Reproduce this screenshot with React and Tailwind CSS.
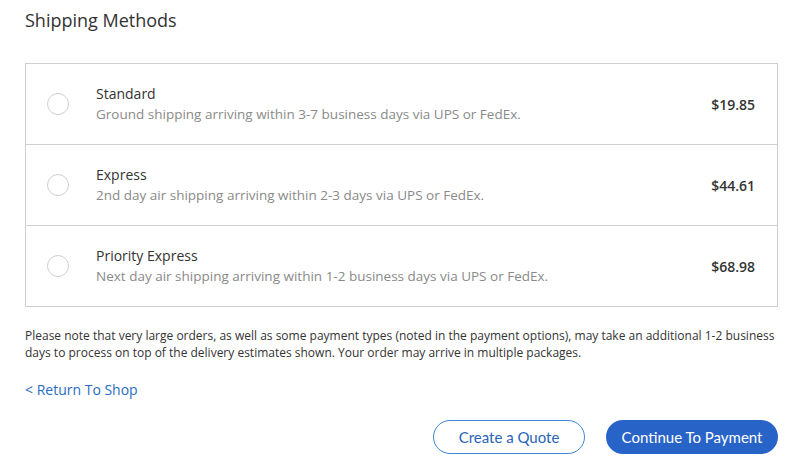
import React, { useState } from 'react';

const methods = [
  { id: 'standard', name: 'Standard', desc: 'Ground shipping arriving within 3-7 business days via UPS or FedEx.', price: '$19.85' },
  { id: 'express', name: 'Express', desc: '2nd day air shipping arriving within 2-3 days via UPS or FedEx.', price: '$44.61' },
  { id: 'priority', name: 'Priority Express', desc: 'Next day air shipping arriving within 1-2 business days via UPS or FedEx.', price: '$68.98' },
];

export default function App() {
  const [selected, setSelected] = useState(null);

  return (
    <div className="min-h-screen bg-white px-[25px] pt-[8px] text-[#333]" style={{ fontFamily: '"Open Sans", sans-serif' }}>
      <h1 className="text-[18px] leading-[24px] text-[#333] font-normal">Shipping Methods</h1>

      <div className="mt-[31px] border border-[#cfcfcf] w-[753px]">
        {methods.map((m, i) => (
          <label
            key={m.id}
            className={`flex items-center cursor-pointer ${i > 0 ? 'h-[81px] border-t border-[#cfcfcf]' : 'h-[80px]'}`}
            onClick={() => setSelected(m.id)}
          >
            <span className="ml-[21px] w-[22px] h-[22px] rounded-full border border-[#cfcfcf] flex items-center justify-center shrink-0">
              {selected === m.id && <span className="w-[10px] h-[10px] rounded-full bg-[#2a64c5]" />}
            </span>
            <span className="ml-[27px] flex-1 flex flex-col">
              <span className="text-[14px] leading-[20px] text-[#333]">{m.name}</span>
              <span className="text-[13.5px] leading-[20px] text-[#8a8a8a]">{m.desc}</span>
            </span>
            <span className="mr-[22px] text-[14px] font-semibold text-[#333]">{m.price}</span>
          </label>
        ))}
      </div>

      <p className="mt-[20px] text-[12px] leading-[17px] text-[#333] w-[760px]">
        Please note that very large orders, as well as some payment types (noted in the payment options), may take an additional 1-2 business days to process on top of the delivery estimates shown. Your order may arrive in multiple packages.
      </p>

      <a href="#" className="inline-block mt-[19px] text-[14px] leading-[20px] text-[#2a6bc2]">&lt; Return To Shop</a>

      <div className="flex justify-end gap-[21px] w-[753px] mt-[19px]" style={{ fontFamily: 'Lato, sans-serif' }}>
        <button className="w-[152px] h-[34px] rounded-full border border-[#3f86d4] text-[#2a64b8] text-[15px] bg-white">
          Create a Quote
        </button>
        <button className="w-[172px] h-[34px] rounded-full bg-[#2863c8] text-white text-[15px]">
          Continue To Payment
        </button>
      </div>
    </div>
  );
}
